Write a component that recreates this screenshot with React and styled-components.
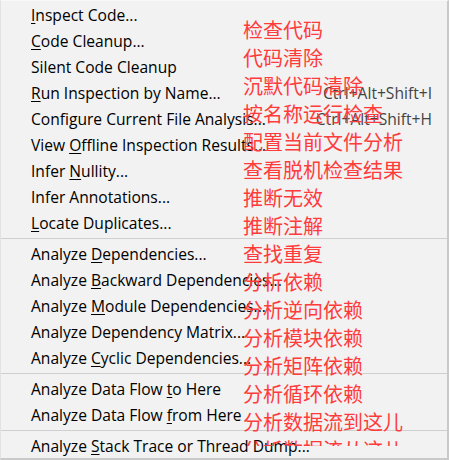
import React from "react";
import styled, { createGlobalStyle } from "styled-components";

const GlobalStyle = createGlobalStyle`
  html, body { margin: 0; padding: 0; background: #f2f2f2; }
  #root { width: 449px; height: 460px; }
`;

const Menu = styled.div`
  position: relative;
  box-sizing: border-box;
  width: 449px;
  height: 460px;
  overflow: hidden;
  background: #f2f2f2;
  border-left: 1px solid #e2e2e2;
  border-top: 1px solid #f8f8f8;
  border-right: 2px solid #c9c9c9;
  border-bottom: 2px solid #c9c9c9;
  padding-top: 1px;
  display: flex;
  flex-direction: column;
  font-family: "Open Sans", "Noto Sans", sans-serif;
  font-size: 15.6px;
  color: #000;
`;

const Item = styled.div`
  height: 26px;
  flex: none;
  display: flex;
  align-items: center;
  padding-left: 30px;
  padding-right: 15px;
  white-space: nowrap;
`;

const Label = styled.span`
  flex: 1;
`;

const Shortcut = styled.span`
  color: #444444;
`;

const Mnemonic = styled.u`
  text-decoration-thickness: 1px;
  text-underline-offset: 2px;
`;

const Separator = styled.div`
  flex: none;
  height: 5px;
  display: flex;
  align-items: center;
  &::after {
    content: "";
    flex: 1;
    height: 1px;
    background: #cfcfcf;
  }
`;

const Notes = styled.div`
  position: absolute;
  left: 242px;
  top: 15px;
  height: 430px;
  overflow: hidden;
  color: #ff3b3b;
  font-family: "Noto Sans CJK SC", sans-serif;
  font-size: 20px;
  line-height: 28px;
  white-space: nowrap;
`;

const Note = styled.div``;

const groups = [
  [
    ["", "I", "nspect Code..."],
    ["", "C", "ode Cleanup..."],
    ["Silent Code Cleanup", "", ""],
    ["", "R", "un Inspection by Name...", "Ctrl+Alt+Shift+I"],
    ["Configure Current File Analysis...", "", "", "Ctrl+Alt+Shift+H"],
    ["View ", "O", "ffline Inspection Results..."],
    ["Infer ", "N", "ullity..."],
    ["Infer Annotations...", "", ""],
    ["", "L", "ocate Duplicates..."],
  ],
  [
    ["Analyze ", "D", "ependencies..."],
    ["Analyze ", "B", "ackward Dependencies..."],
    ["Analyze ", "M", "odule Dependencies..."],
    ["Analyze Dependency Matrix...", "", ""],
    ["Analyze ", "C", "yclic Dependencies..."],
  ],
  [
    ["Analyze Data Flow ", "t", "o Here"],
    ["Analyze Data Flow ", "f", "rom Here"],
  ],
  [["Analyze ", "S", "tack Trace or Thread Dump..."]],
];

const notes = [
  "检查代码",
  "代码清除",
  "沉默代码清除",
  "按名称运行检查",
  "配置当前文件分析",
  "查看脱机检查结果",
  "推断无效",
  "推断注解",
  "查找重复",
  "分析依赖",
  "分析逆向依赖",
  "分析模块依赖",
  "分析矩阵依赖",
  "分析循环依赖",
  "分析数据流到这儿",
  "分析数据流从这儿",
];

export default function App() {
  return (
    <>
      <GlobalStyle />
      <Menu>
        {groups.map((g, gi) => (
          <React.Fragment key={gi}>
            {gi > 0 && <Separator />}
            {g.map(([pre, mn, post, sc], i) => (
              <Item key={i}>
                <Label>
                  {pre}
                  {mn && <Mnemonic>{mn}</Mnemonic>}
                  {post}
                </Label>
                {sc && <Shortcut>{sc}</Shortcut>}
              </Item>
            ))}
          </React.Fragment>
        ))}
        <Notes>
          {notes.map((n, i) => (
            <Note key={i}>{n}</Note>
          ))}
        </Notes>
      </Menu>
    </>
  );
}
